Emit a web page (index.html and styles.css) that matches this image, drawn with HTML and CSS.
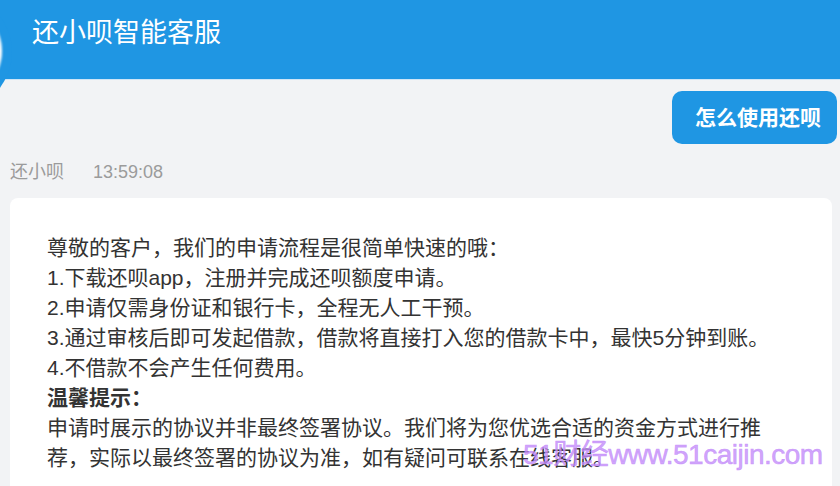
FILE: index.html
```html
<!DOCTYPE html>
<html lang="zh-CN">
<head>
    <meta charset="UTF-8">
    <meta name="viewport" content="width=device-width, initial-scale=1.0">
    <title>还小呗智能客服</title>
    <link rel="stylesheet" href="styles.css">
</head>
<body>

<div class="header">
    <h1 class="title">还小呗智能客服</h1>
</div>

<div class="chat">
    <!-- user question -->
    <div class="row-right">
        <div class="ask">怎么使用还呗</div>
    </div>

    <!-- bot answer -->
    <div class="sender">
        <span class="name">还小呗</span>
        <span class="time">13:59:08</span>
    </div>
    <div class="card">
        <p>尊敬的客户，我们的申请流程是很简单快速的哦：</p>
        <p>1.下载还呗app，注册并完成还呗额度申请。</p>
        <p>2.申请仅需身份证和银行卡，全程无人工干预。</p>
        <p>3.通过审核后即可发起借款，借款将直接打入您的借款卡中，最快5分钟到账。</p>
        <p>4.不借款不会产生任何费用。</p>
        <p class="tip">温馨提示：</p>
        <p>申请时展示的协议并非最终签署协议。我们将为您优选合适的资金方式进行推荐，实际以最终签署的协议为准，如有疑问可联系在线客服。</p>
    </div>
</div>

<div class="watermark">51财经www.51caijin.com</div>

</body>
</html>
```

FILE: styles.css
```css
body {
    margin: 0;
    background-color: #f2f3f5;
    font-family: "Liberation Sans", "Noto Sans CJK SC", sans-serif;
    color: #333;
    overflow: hidden;
}
.header {
    position: relative;
    height: 80px;
    background-color: #1f96e3;
    border-bottom: 1px solid #cfe5f6;
    box-sizing: border-box;
    padding: 14px 32px 0 32px;
}
.header::before {
    content: "";
    position: absolute;
    left: -106px;
    top: -7px;
    width: 118px;
    height: 118px;
    border-radius: 50%;
    background-color: #1f96e3;
}
.header::after {
    content: "";
    position: absolute;
    left: -94px;
    top: 3px;
    width: 96px;
    height: 96px;
    border-radius: 50%;
    background-color: #fff;
    filter: blur(1px);
}
.title {
    position: relative;
    z-index: 1;
    margin: 0;
    font-size: 27px;
    line-height: 38px;
    font-weight: normal;
    color: #fff;
}
.chat {
    padding: 11px 3px 0 10px;
}
.row-right {
    display: flex;
    justify-content: flex-end;
}
.ask {
    background-color: #1f96e3;
    color: #fff;
    font-size: 21px;
    font-weight: bold;
    line-height: 53px;
    padding: 0 16px 0 23px;
    border-radius: 10px;
}
.sender {
    display: flex;
    gap: 29px;
    margin-top: 16px;
    font-size: 18px;
    line-height: 24px;
    color: #9b9b9b;
}
.card {
    margin: 14px 5px 0 0;
    background-color: #fff;
    border-radius: 8px;
    padding: 35px 60px 40px 37px;
}
.card p {
    margin: 0;
    font-size: 21px;
    line-height: 30px;
}
.card .tip {
    font-weight: bold;
}
.watermark {
    position: absolute;
    left: 523px;
    top: 438px;
    white-space: nowrap;
    font-size: 28px;
    line-height: 34px;
    letter-spacing: -0.5px;
    color: rgba(196, 140, 250, 0.8);
    -webkit-text-stroke: 0.6px rgba(196, 140, 250, 0.8);
}
```
